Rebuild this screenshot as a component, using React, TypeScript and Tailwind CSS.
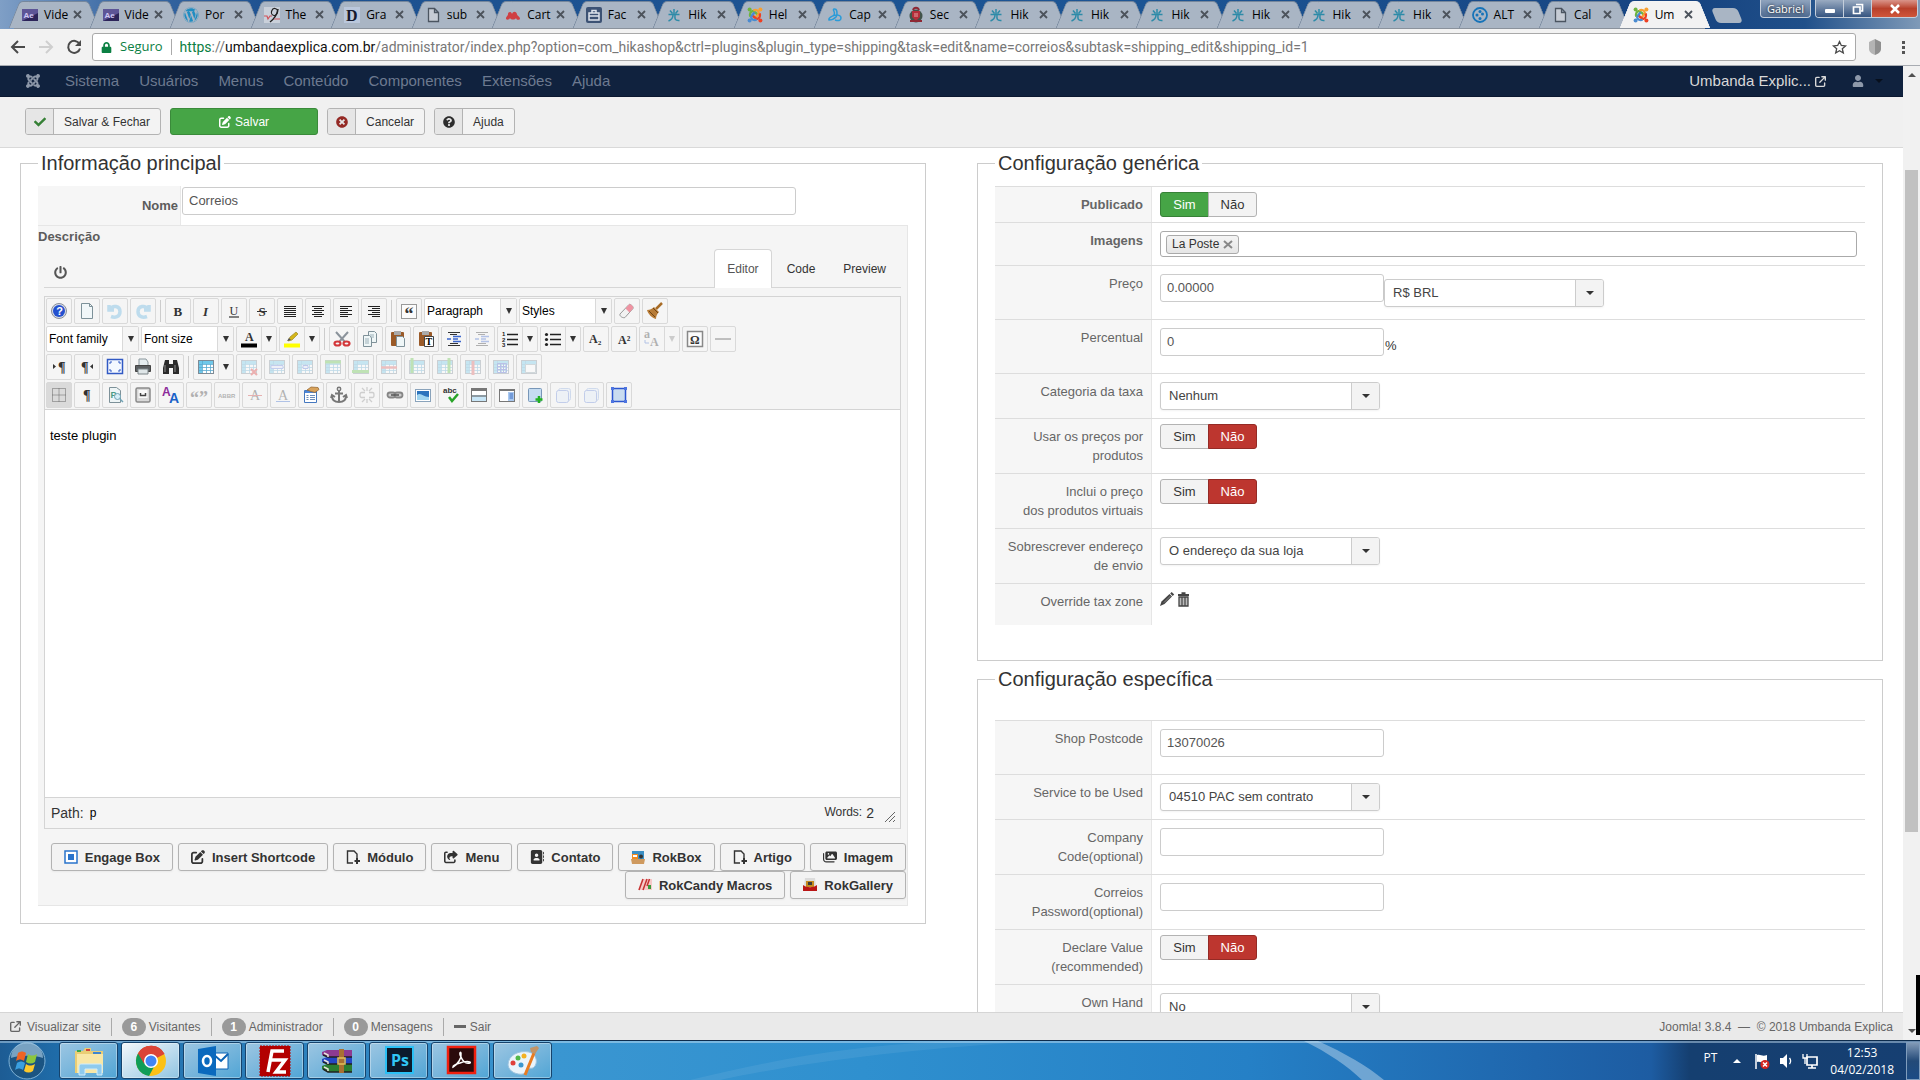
import type { ReactNode } from 'react';
import { clsx } from 'clsx';
import { FaWordpress, FaJoomla, FaPowerOff, FaCheck, FaTimesCircle, FaQuestionCircle, FaUser, FaLock } from 'react-icons/fa';
import { FaPenToSquare, FaArrowUpRightFromSquare, FaShareFromSquare, FaAddressBook, FaImages } from 'react-icons/fa6';

/* ---------- small drawings ---------- */

function Svg({ size = 16, children, className }: { size?: number; children: ReactNode; className?: string }) {
  return (
    <svg viewBox={`0 0 ${size} ${size}`} width={size} height={size} fill="none" className={clsx('shrink-0 overflow-visible', className)} aria-hidden="true">
      {children}
    </svg>
  );
}

function JoomlaColor() {
  const colors = ['#6fb43f', '#f7a032', '#ee4023', '#4a8bd0'];
  return (
    <Svg>
      {colors.map((c, i) => (
        <g key={c} transform={`rotate(${i * 90} 8 8)`} stroke={c} fill={c}>
          <circle cx="2.6" cy="2.6" r="2" stroke="none" />
          <path d="M3.3 9.6C2.4 7 3.4 4.6 5.6 4.2 7 4 8 5 10.6 7.6" fill="none" strokeWidth="2.3" />
        </g>
      ))}
    </Svg>
  );
}

function HikaIcon() {
  return (
    <Svg>
      <path d="M8 2v6M2.500 7.500h11M4 3.500l2.500 3M12 3.500l-2.500 3M7 8c0 3-2 5-4.500 6M9 8c-.5 4 0 6 4.500 5.500" stroke="#2d8ba8" strokeWidth="1.500" />
    </Svg>
  );
}

function FileIcon() {
  return (
    <Svg>
      <path d="M3.500 1.500h6l4 4v9h-10zM9.500 1.500v4h4" stroke="#4b5561" strokeWidth="1.300" fill="#c6ccd5" />
    </Svg>
  );
}

const favicons: Record<string, ReactNode> = {
  ae: (
    <Svg>
      <rect y="2" width="16" height="12" fill="#2c2459" />
      <path d="M0 2h16v4L0 14z" fill="#5d5596" />
      <text x="1.500" y="11" fontSize="8" fontWeight="bold" fill="#cfc8f2" fontFamily="Liberation Sans">Ae</text>
    </Svg>
  ),
  wp: <FaWordpress className="size-4 shrink-0 rounded-full text-[#1f8dc2]" />,
  nine: (
    <Svg>
      <rect width="16" height="16" fill="#c9d0da" />
      <path d="M0 9h3l1 3 2-3h2" stroke="#d0525a" strokeWidth="1.200" />
      <ellipse cx="10.500" cy="5" rx="3" ry="3.500" stroke="#222" strokeWidth="1.200" transform="rotate(20 10.500 5)" />
      <path d="M14 2c-1 6-4 10-8 13" stroke="#222" strokeWidth="1.500" />
      <path d="M10 12h6" stroke="#d0525a" />
    </Svg>
  ),
  d: (
    <Svg>
      <rect width="16" height="16" fill="#bac7dc" />
      <text x="2" y="13.500" fontSize="16" fontWeight="bold" fill="#15192e" fontFamily="Liberation Serif">D</text>
    </Svg>
  ),
  file: <FileIcon />,
  cart: (
    <Svg>
      <path d="M1 12c0-3 2-3 2-5s3-3 4 0c1-3 4-3 5 0 0 2 3 2 3 5-2 2-4 0-4-1-1 2-5 2-6 0-1 2-3 2-4 1z" fill="#cf3f43" />
    </Svg>
  ),
  face: (
    <Svg>
      <rect width="16" height="16" rx="2" fill="#3c5274" />
      <path d="M3 6h10v7H3zM6 6V3.500h4V6M3 9h10" stroke="#dde3ec" strokeWidth="1.500" />
    </Svg>
  ),
  hika: <HikaIcon />,
  joomla: <JoomlaColor />,
  cap: (
    <Svg>
      <path d="M2 13c-1-3 3-3 5-5 2-3-2-5 0-6 3-1 4 5 2 8-2 2-5 3-7 3zm6 0c3 1 6 1 6-2s-5-4-8-2" stroke="#2a9bd8" strokeWidth="1.500" />
    </Svg>
  ),
  sec: (
    <Svg>
      <circle cx="8" cy="9" r="6.500" fill="#41534a" />
      <path d="M4 4h8v6l-4 4-4-4z" fill="#b42c39" />
      <path d="M5 3c1-3 5-3 6 0M2 14h12" stroke="#8d2834" strokeWidth="2" />
      <path d="M6 7h4M6 9h4" stroke="#e5a0a0" />
    </Svg>
  ),
  alt: (
    <Svg>
      <circle cx="8" cy="8" r="7" stroke="#1673b8" strokeWidth="1.800" />
      <g fill="#1673b8">
        <circle cx="8" cy="4.500" r="1.500" />
        <circle cx="5" cy="8" r="1.500" />
        <circle cx="10.500" cy="7" r="1.500" />
        <circle cx="8" cy="11.500" r="1.500" />
      </g>
    </Svg>
  ),
};

const serif = 'Liberation Serif';
const sans = 'Liberation Sans';

function Glyph({ x, y, size, children, ...rest }: any) {
  return (
    <text x={x} y={y} fontSize={size} fontFamily={serif} fontWeight="bold" fill="#333" {...rest}>
      {children}
    </text>
  );
}

function TableBase() {
  return (
    <>
      <rect x="2.500" y="3.500" width="15" height="13" fill="#fff" stroke="#7d8b96" />
      <path d="M3 4h14v3H3zM3 7h3v9H3z" fill="#6fc8ea" />
      <path d="M6.500 4v12M10.500 7v9M14.500 7v9M3 7.500h14M3 10.500h14M3 13.500h14" stroke="#5aa9cf" strokeWidth=".8" />
    </>
  );
}

const lines = (a: number[][]) => <path d={a.map(([x, y, w]) => `M${x} ${y}.5h${w}`).join('')} stroke="#222" strokeWidth="1.200" />;

const tools: Record<string, ReactNode> = {
  help: (
    <>
      <circle cx="10" cy="10" r="7.500" fill="#d7dce6" stroke="#8a8f9c" />
      <circle cx="10" cy="10" r="6" fill="#2350cf" />
      <text x="7.300" y="14" fontSize="11" fontWeight="bold" fill="#fff" fontFamily={sans}>?</text>
    </>
  ),
  newdoc: <path d="M4.500 2.500h8l3 3v12h-11zM12.500 2.500v3h3" fill="#f1f7f9" stroke="#7d9199" />,
  undo: <path d="M4 4v5h5M4.500 8.500C8 3.500 15 5 15 10.500S10 17 6 15.500" stroke="#5aaee0" strokeWidth="3.500" />,
  redo: <path d="M16 4v5h-5M15.500 8.500C12 3.500 5 5 5 10.500S10 17 14 15.500" stroke="#5aaee0" strokeWidth="3.500" />,
  bold: <Glyph x="5.500" y="14.500" size="13">B</Glyph>,
  italic: <Glyph x="7" y="14.500" size="13" fontStyle="italic">I</Glyph>,
  underline: (
    <>
      <Glyph x="5.500" y="13.500" size="12" fontWeight="normal">U</Glyph>
      <path d="M5 16h10" stroke="#333" strokeWidth="1.200" />
    </>
  ),
  strike: (
    <>
      <Glyph x="6.500" y="14.500" size="13">S</Glyph>
      <path d="M5 10.500h10" stroke="#333" />
    </>
  ),
  full: lines([[4, 5, 12], [4, 7, 12], [4, 9, 12], [4, 11, 12], [4, 13, 12], [4, 15, 12]]),
  center: lines([[4, 5, 12], [6, 7, 8], [4, 9, 12], [6, 11, 8], [4, 13, 12], [6, 15, 8]]),
  left: lines([[4, 5, 12], [4, 7, 8], [4, 9, 12], [4, 11, 8], [4, 13, 12], [4, 15, 8]]),
  right: lines([[4, 5, 12], [8, 7, 8], [4, 9, 12], [8, 11, 8], [4, 13, 12], [8, 15, 8]]),
  quote: (
    <>
      <rect x="2.500" y="3.500" width="15" height="14" fill="#fbfbfb" stroke="#999" />
      <Glyph x="5.500" y="19" size="18">“</Glyph>
    </>
  ),
  eraser: (
    <>
      <path d="M3 13 12 3.500c1-1 5 2 4 4L8 16.500c-2 1-6-1.500-5-3.500z" fill="#f2f2f2" stroke="#999" />
      <path d="m8.500 7.500 3.500-4c1-1 5 2 4 4l-3.500 4z" fill="#ef93a2" />
    </>
  ),
  broom: (
    <>
      <path d="m17 2-6 6" stroke="#a86c26" strokeWidth="2.500" />
      <path d="M2 9c3 0 5-1 7-3l5 5c-2 2-3 4-3 7-4-1-8-5-9-9z" fill="#b87c37" />
      <path d="m8 7 5 5M4 10l6 6" stroke="#704414" />
    </>
  ),
  forecolor: (
    <>
      <Glyph x="6" y="12" size="12">A</Glyph>
      <path d="M2 14.500h16v4H2z" fill="#000" />
    </>
  ),
  backcolor: (
    <>
      <path d="m6 12 2-4 6-5 2 2-6 6z" fill="#d5b619" stroke="#9a8a2c" strokeWidth=".7" />
      <path d="m5 12 2-3 2 2z" fill="#555" />
      <path d="M2 14.500h16v4H2z" fill="#ff0" />
    </>
  ),
  cut: (
    <>
      <path d="m4 3 9 10M16 3 7 13" stroke="#8b939b" strokeWidth="2" />
      <ellipse cx="5.500" cy="14.500" rx="3" ry="2" stroke="#d3383b" strokeWidth="2.200" />
      <ellipse cx="14.500" cy="14.500" rx="3" ry="2" stroke="#d3383b" strokeWidth="2.200" />
    </>
  ),
  copy: (
    <>
      <path d="M8.500 2.500h6l2 2v9h-8z" fill="#eff6f7" stroke="#7f9199" />
      <path d="M3.500 6.500h6l2 2v9h-8z" fill="#eff6f7" stroke="#7f9199" />
      <path d="M5 10h4M5 12h4M5 14h4M10 6h4M10 8h4" stroke="#9cb0b8" />
    </>
  ),
  paste: (
    <>
      <rect x="3" y="3" width="13" height="14" rx="1" fill="#9a5a28" />
      <path d="M6 2h7v4H6z" fill="#aaa" />
      <path d="M8.500 7.500h6l2 2v8h-8z" fill="#eff6f7" stroke="#7f9199" />
    </>
  ),
  pastetext: (
    <>
      <rect x="3" y="3" width="13" height="14" rx="1" fill="#9a5a28" />
      <path d="M6 2h7v4H6z" fill="#aaa" />
      <path d="M8.500 7.500h9v10h-9z" fill="#fff" stroke="#444" />
      <Glyph x="9.500" y="16" size="10" fill="#000">T</Glyph>
    </>
  ),
  indent: (
    <>
      <path d="M4 3.500h12M4 16.500h12M6 5.500h7M6 14.500h8" stroke="#333" />
      <path d="M3 10h4M9 7.500h8M9 12.500h8M9 10h5" stroke="#3b66cc" strokeWidth="1.700" />
    </>
  ),
  ol: (
    <>
      <path d="M7 5.500h11M7 10.500h11M7 15.500h11" stroke="#222" strokeWidth="1.300" />
      <text x="2" y="7" fontSize="6" fontWeight="bold" fill="#222" fontFamily={sans}>1</text>
      <text x="2" y="12.500" fontSize="6" fontWeight="bold" fill="#222" fontFamily={sans}>2</text>
      <text x="2" y="18" fontSize="6" fontWeight="bold" fill="#222" fontFamily={sans}>3</text>
    </>
  ),
  ul: (
    <>
      <path d="M7 5.500h11M7 10.500h11M7 15.500h11" stroke="#222" strokeWidth="1.300" />
      <g fill="#222">
        <circle cx="3.500" cy="5.500" r="1.600" />
        <circle cx="3.500" cy="10.500" r="1.600" />
        <circle cx="3.500" cy="15.500" r="1.600" />
      </g>
    </>
  ),
  sub: <Glyph x="3" y="14" size="12">A₂</Glyph>,
  sup: <Glyph x="4" y="15" size="12">A²</Glyph>,
  aa: (
    <>
      <Glyph x="2" y="9" size="12">a</Glyph>
      <Glyph x="8" y="17" size="12">A</Glyph>
      <path d="M3 11v3h4" stroke="#3b66cc" />
    </>
  ),
  omega: (
    <>
      <rect x="2.500" y="2.500" width="15" height="15" fill="#fbfbfb" stroke="#888" strokeWidth="1.500" />
      <Glyph x="5" y="14.500" size="12">Ω</Glyph>
    </>
  ),
  hr: <path d="M2 10h16" stroke="#888" />,
  ltr: (
    <>
      <path d="m4 7 3 2.500-3 2.500z" fill="#333" />
      <Glyph x="9" y="14.500" size="14">¶</Glyph>
    </>
  ),
  rtl: (
    <>
      <Glyph x="4" y="14.500" size="14">¶</Glyph>
      <path d="m16 7-3 2.500 3 2.500z" fill="#333" />
    </>
  ),
  screen: (
    <>
      <rect x="2.500" y="2.500" width="15" height="14" fill="#f4f8ff" stroke="#3159c4" strokeWidth="1.500" />
      <path d="M5 7V5h2M13 5h2v2M15 12v2h-2M7 14H5v-2" stroke="#3159c4" />
    </>
  ),
  print: (
    <>
      <path d="M6 2h7l2 3v4H6z" fill="#e5edf0" stroke="#8b979c" />
      <path d="M2.500 8.500h15v6h-15z" fill="#5a5e61" stroke="#444" />
      <path d="M5 12h10v5H5z" fill="#dfe6e8" stroke="#7b8488" />
    </>
  ),
  search: (
    <>
      <path d="M4 3h4v4h4V3h4l2 8v6h-6v-6H8v6H2v-6z" fill="#2c2c2c" />
      <path d="M4 8v7M14 8v7" stroke="#8c8c8c" />
    </>
  ),
  table: <TableBase />,
  tdel: (
    <>
      <TableBase />
      <path d="m12 12 6 6m0-6-6 6" stroke="#d33" strokeWidth="2" />
    </>
  ),
  trow: (
    <>
      <TableBase />
      <path d="M4 8.500h12v3H4z" fill="#dfe6fb" stroke="#6484e0" />
    </>
  ),
  tcell: (
    <>
      <TableBase />
      <path d="M8 8.500h5v3H8z" fill="#dfe6fb" stroke="#5877d8" />
    </>
  ),
  trowb: (
    <>
      <TableBase />
      <path d="M2 5h16" stroke="#5cc140" strokeWidth="3" />
    </>
  ),
  trowa: (
    <>
      <TableBase />
      <path d="M1 14.500h17" stroke="#5cc140" strokeWidth="3" />
    </>
  ),
  trowd: (
    <>
      <TableBase />
      <path d="M2 10.500h16" stroke="#dd5c5c" strokeWidth="2.500" />
    </>
  ),
  tcolb: (
    <>
      <TableBase />
      <path d="M5 1v15" stroke="#5cc140" strokeWidth="3" />
    </>
  ),
  tcola: (
    <>
      <TableBase />
      <path d="M14 1v15" stroke="#5cc140" strokeWidth="3" />
    </>
  ),
  tcold: (
    <>
      <TableBase />
      <path d="M10 4v14" stroke="#dd5c5c" strokeWidth="3" />
    </>
  ),
  tsplit: (
    <>
      <TableBase />
      <path d="M6.500 6.500h9v9h-9zM9.500 6v9M12.500 6v9M6 9.500h9M6 12.500h9" stroke="#4c63cf" />
    </>
  ),
  tmerge: (
    <>
      <TableBase />
      <path d="M6.500 7.500h10v8h-10z" fill="#fff" stroke="#8fa3ad" />
    </>
  ),
  grid: <path d="M3.500 3.500h13v13h-13zM10 3.500v13M3.500 10h13" stroke="#666" strokeDasharray="1 1" />,
  para: <Glyph x="6" y="14.500" size="14">¶</Glyph>,
  preview: (
    <>
      <path d="M4.500 2.500h7l4 3v12h-11z" fill="#eef5f6" stroke="#7d9199" />
      <text x="5.500" y="13" fontSize="9" fontWeight="bold" fill="#4a9a86" fontFamily={sans}>P</text>
      <circle cx="12.500" cy="11.500" r="3" fill="#d5eff7" stroke="#6fa3b5" />
      <path d="m15 14 3 3" stroke="#6fa3b5" strokeWidth="1.500" />
    </>
  ),
  nbsp: (
    <>
      <rect x="3" y="3" width="14" height="14" rx="1.500" fill="#d8d8d8" stroke="#8a8a8a" strokeWidth="1.500" />
      <path d="M5.500 5h9v8h-9z" fill="#fafafa" />
      <path d="M7.500 8v2.500h5V8" stroke="#444" strokeWidth="1.500" />
    </>
  ),
  styles: (
    <>
      <text x="1" y="11" fontSize="12" fontWeight="bold" fill="#8c2b9b" fontFamily={sans}>A</text>
      <text x="8" y="17.500" fontSize="14" fontWeight="bold" fill="#1b62c8" fontFamily={sans}>A</text>
    </>
  ),
  cite: <Glyph x="1" y="19" size="18">“”</Glyph>,
  abbr: <text x="1" y="13" fontSize="6" fontWeight="bold" fill="#333" fontFamily={sans}>ABBR</text>,
  del: (
    <>
      <Glyph x="5" y="15" size="14" fontWeight="normal">A</Glyph>
      <path d="M3 10.500h14" stroke="#c33" />
    </>
  ),
  ins: (
    <>
      <Glyph x="5" y="14.500" size="14" fontWeight="normal">A</Glyph>
      <path d="M3 16.500h14" stroke="#36c" />
    </>
  ),
  attribs: (
    <>
      <path d="M3.500 5.500h12v12h-12z" fill="#fff" stroke="#4477bf" />
      <path d="M4 6h11v2H4z" fill="#4c86d8" />
      <path d="M5.500 10.500h2M5.500 12.500h2M5.500 14.500h2M9 10.500h5M9 12.500h5M9 14.500h5" stroke="#6b8bb8" />
      <path d="m6 5 4-3 7 .5 1 2-4 3-4-1z" fill="#d8a25b" stroke="#91622a" strokeWidth=".7" />
    </>
  ),
  anchor: (
    <>
      <circle cx="10" cy="4" r="1.700" stroke="#777" strokeWidth="1.500" />
      <path d="M10 6v11M6 8.500h8M3 11c0 4 3 6 7 6s7-2 7-6M2 13l1-3 3 2M18 13l-1-3-3 2" stroke="#777" strokeWidth="2" />
    </>
  ),
  unlink: <path d="M8 7.500H4.500c-2 0-2 5 0 5H8M12 7.500h3.500c2 0 2 5 0 5H12M10 2v4M10 14v4M5 3l3 3M15 3l-3 3M5 17l3-3M15 17l-3-3" stroke="#888" strokeWidth="1.300" />,
  link: (
    <>
      <rect x="2.500" y="7.500" width="8" height="5" rx="2.500" fill="#ccc" stroke="#858585" strokeWidth="1.800" />
      <rect x="9.500" y="7.500" width="8" height="5" rx="2.500" fill="#ccc" stroke="#858585" strokeWidth="1.800" />
      <path d="M6 10h8" stroke="#555" strokeWidth="1.500" />
    </>
  ),
  image: (
    <>
      <rect x="2.500" y="4.500" width="15" height="12" fill="#fff" stroke="#8aa3bb" />
      <path d="M4 6h12v9H4z" fill="#2c73bd" />
      <path d="M4 10c4-3 6 2 12 2v3H4z" fill="#9fd4f0" />
    </>
  ),
  spell: (
    <>
      <text x="2" y="8" fontSize="8" fontWeight="bold" fill="#333" fontFamily={sans}>abc</text>
      <path d="m8 12 3 4 6-7" stroke="#28a428" strokeWidth="2.500" />
    </>
  ),
  hbreak: (
    <>
      <rect x="2.500" y="3.500" width="15" height="13" fill="#fff" stroke="#777" />
      <path d="M3 4h14v2H3z" fill="#777" />
      <path d="M3 12h14v4H3z" fill="#c8e6f7" />
      <path d="M3 11h14" stroke="#4f6470" strokeWidth="1.300" />
    </>
  ),
  readmore: (
    <>
      <rect x="2.500" y="4.500" width="15" height="12" fill="#fff" stroke="#777" />
      <path d="M3 4h14v2H3z" fill="#777" />
      <path d="M11 7h6v9h-6z" fill="#a9c8ef" />
      <path d="M12.500 9h3.500M12.500 11h3.500M12.500 13h3.500" stroke="#3d6cc1" />
    </>
  ),
  layeradd: (
    <>
      <rect x="3.500" y="3.500" width="13" height="13" rx="1" fill="#c5dcf1" stroke="#7796b8" />
      <path d="M14 11v7M10.500 14.500h7" stroke="#22b022" strokeWidth="2.500" />
    </>
  ),
  layer: (
    <>
      <rect x="5.500" y="3.500" width="12" height="12" rx="2" fill="#e1ecf8" stroke="#8aa9dd" />
      <rect x="3.500" y="5.500" width="12" height="12" rx="2" fill="#e1ecf8" stroke="#6484d8" />
    </>
  ),
  abs: (
    <>
      <rect x="3.500" y="3.500" width="13" height="13" fill="#c9dcf0" stroke="#2b55cf" strokeWidth="1.500" />
      <path d="M2 2h3v3H2zM15 2h3v3h-3zM2 15h3v3H2zM15 15h3v3h-3z" fill="#4d74e0" />
    </>
  ),
};

/* ---------- browser ---------- */

const tabs: [string, string][] = [
  ['ae', 'Vide'], ['ae', 'Vide'], ['wp', 'Por'], ['nine', 'The'], ['d', 'Gra'], ['file', 'sub'], ['cart', 'Cart'],
  ['face', 'Fac'], ['hika', 'Hik'], ['joomla', 'Hel'], ['cap', 'Cap'], ['sec', 'Sec'], ['hika', 'Hik'], ['hika', 'Hik'],
  ['hika', 'Hik'], ['hika', 'Hik'], ['hika', 'Hik'], ['hika', 'Hik'], ['alt', 'ALT'], ['file', 'Cal'], ['joomla', 'Um'],
];

function BrowserTab({ icon, title, active }: { icon: string; title: string; active: boolean }) {
  return (
    <li
      className={clsx(
        'relative isolate flex h-full min-w-0 flex-1 items-center pl-2 text-[12px]',
        'before:absolute before:inset-y-0 before:left-0 before:-z-10 before:w-3/4 before:-skew-x-[22deg] before:rounded-tl before:border-l before:border-t',
        'after:absolute after:inset-y-0 after:right-0 after:-z-10 after:w-3/4 after:skew-x-[22deg] after:rounded-tr after:border-r after:border-t',
        active
          ? 'z-10 before:border-[#f4f4f4] before:bg-[#f2f2f2] after:border-[#f4f4f4] after:bg-[#f2f2f2]'
          : 'before:border-[#76879c] before:bg-[#a9b5c4] after:border-[#76879c] after:bg-[#a9b5c4]'
      )}
    >
      {favicons[icon]}
      <span className="ml-1.5 w-[29px] whitespace-nowrap">{title}</span>
      <button aria-label="Fechar guia">
        <Svg size={9}>
          <path d="m1 1 7 7m0-7L1 8" stroke="#4c535c" strokeWidth="1.800" />
        </Svg>
      </button>
    </li>
  );
}

function TitleBar() {
  return (
    <div className="flex h-[29px] shrink-0 items-start bg-[linear-gradient(90deg,#7f9fc6,#3d6ba5_6%,#1d5190_14%,#1c5594_60%,#164380_88%,#20508a_94%,#7f9ab8)] font-['Open_Sans',sans-serif]">
      <ul className="ml-3.5 mt-px flex h-7 min-w-0 flex-1 border-b border-[#8a929c]">
        {tabs.map(([icon, title], i) => (
          <BrowserTab key={i} icon={icon} title={title} active={i === tabs.length - 1} />
        ))}
      </ul>
      <button aria-label="Nova guia" className="ml-[9px] mt-2 h-[15px] w-[26px] skew-x-[22deg] rounded-sm bg-[#a9b5c4]" />
      <button className="ml-[20px] h-[18px] w-[51px] rounded-b border border-t-0 border-[#c4cedb] bg-linear-to-b from-[#8fa3bd] to-[#4e6a90] text-[11px] leading-4 text-white [text-shadow:0_0_3px_#000]">
        Gabriel
      </button>
      <div className="ml-1 mr-0.5 flex h-[18px] w-[103px] overflow-hidden rounded-b border border-t-0 border-[#c4cedb]">
        <button aria-label="Minimizar" className="flex w-7 items-center justify-center border-r border-[#c4cedb] bg-linear-to-b from-[#9aabc1] to-[#365580]">
          <span className="mt-1 h-1 w-2.5 rounded-[1px] bg-white" />
        </button>
        <button aria-label="Restaurar" className="flex w-7 items-center justify-center border-r border-[#c4cedb] bg-linear-to-b from-[#9aabc1] to-[#365580]">
          <Svg size={12}>
            <path d="M4 1.500h6.500V8H9M1.500 4H8v6.500H1.500z" stroke="#fff" strokeWidth="1.700" />
          </Svg>
        </button>
        <button aria-label="Fechar" className="flex flex-1 items-center justify-center bg-linear-to-b from-[#d9948a] via-[#b8402b] to-[#d0563a]">
          <Svg size={12}>
            <path d="m2 2 8 8m0-8-8 8" stroke="#fff" strokeWidth="2.500" />
          </Svg>
        </button>
      </div>
    </div>
  );
}

function AddressBar() {
  return (
    <div className="flex h-[37px] shrink-0 items-center border-b border-[#a8acb2] bg-[#f2f2f2] font-['Open_Sans',sans-serif] text-[13px]">
      <button aria-label="Voltar" className="ml-2.5">
        <Svg size={16}>
          <path d="M15 8H2m6-6L2 8l6 6" stroke="#4a4a4a" strokeWidth="2" />
        </Svg>
      </button>
      <button aria-label="Avançar" className="ml-3">
        <Svg size={16}>
          <path d="M1 8h13M8 2l6 6-6 6" stroke="#cfcfcf" strokeWidth="2" />
        </Svg>
      </button>
      <button aria-label="Recarregar" className="ml-3">
        <Svg size={16}>
          <path d="M13.500 5A6 6 0 1 0 14 9.500" stroke="#4a4a4a" strokeWidth="2" />
          <path d="M15 1v6H9z" fill="#4a4a4a" />
        </Svg>
      </button>
      <div className="ml-2.5 flex h-7 min-w-0 flex-1 items-center rounded-[3px] border border-[#a9a9a9] bg-white">
        <FaLock className="ml-2 size-[11px] text-[#0b8043]" />
        <span className="ml-2 text-[#0b8043]">Seguro</span>
        <span className="mx-2 h-4 w-px bg-[#aaa]" />
        <span className="flex-1 truncate font-['Roboto',sans-serif] text-[14px] text-[#777]">
          <span className="text-[#0b8043]">https</span>://<span className="text-[#111]">umbandaexplica.com.br</span>
          /administrator/index.php?option=com_hikashop&amp;ctrl=plugins&amp;plugin_type=shipping&amp;task=edit&amp;name=correios&amp;subtask=shipping_edit&amp;shipping_id=1
        </span>
        <button aria-label="Favoritar" className="mr-2">
          <Svg size={15}>
            <path d="m7.500 1.500 1.800 4 4.200.4-3.200 2.800 1 4.300-3.800-2.300L3.700 13l1-4.300L1.500 5.900l4.200-.4z" stroke="#4a4a4a" strokeWidth="1.300" />
          </Svg>
        </button>
      </div>
      <button aria-label="Extensão" className="ml-[11px]">
        <Svg size={16}>
          <path d="M8 0 14 3v7c0 3-3 5-6 6z" fill="#8f8f8f" />
          <path d="M8 0 2 3v7c0 3 3 5 6 6z" fill="#b4b4b4" />
        </Svg>
      </button>
      <button aria-label="Menu" className="ml-3 mr-[9px]">
        <Svg size={16}>
          <path d="M7 2h3v3H7zM7 7h3v3H7zM7 12h3v3H7z" fill="#555" />
        </Svg>
      </button>
    </div>
  );
}

/* ---------- Joomla top ---------- */

function NavBar() {
  const items = ['Sistema', 'Usuários', 'Menus', 'Conteúdo', 'Componentes', 'Extensões', 'Ajuda'];
  return (
    <nav className="flex h-[31px] shrink-0 items-center border-b border-[#0b1830] bg-[#10223e] text-[15px] text-[#6d7a90]">
      <FaJoomla className="ml-[25px] mr-3.5 size-4 text-[#8e99aa]" />
      {items.map((item) => (
        <a key={item} href="#" className="px-2.5">{item}</a>
      ))}
      <a href="#" className="ml-auto flex items-center text-[#d9d9d9]">
        Umbanda Explic... <FaArrowUpRightFromSquare className="ml-1 size-[11px]" />
      </a>
      <button aria-label="Conta" className="ml-[26px] mr-5 flex items-center">
        <FaUser className="size-3 text-[#8e99aa]" />
        <span className="ml-[11px] border-x-4 border-t-4 border-x-transparent border-t-[#070f1c]" />
      </button>
    </nav>
  );
}

function ActionButton({ icon, children }: { icon: ReactNode; children: ReactNode }) {
  return (
    <button className="flex h-[27px] items-stretch overflow-hidden rounded-[3px] border border-[#b3b3b3] bg-[#f3f3f3] text-[#333]">
      <span className="flex w-7 items-center justify-center border-r border-[#b3b3b3] bg-[#e6e6e6]">{icon}</span>
      <span className="self-center px-2.5">{children}</span>
    </button>
  );
}

function ActionBar() {
  return (
    <div className="flex h-[51px] shrink-0 items-center gap-[9px] border-b border-[#d9d9d9] bg-[#f0f0f0] pb-px pl-[25px] text-[12px]">
      <ActionButton icon={<FaCheck className="size-3 text-[#378137]" />}>Salvar &amp; Fechar</ActionButton>
      <button className="flex h-[27px] w-[148px] items-center justify-center gap-1 rounded-[3px] border border-[#3a8a3a] bg-[#46a546] text-white">
        <FaPenToSquare className="size-3" />
        <span>Salvar</span>
      </button>
      <ActionButton icon={<FaTimesCircle className="size-3 text-[#942a25]" />}>Cancelar</ActionButton>
      <ActionButton icon={<FaQuestionCircle className="size-3 text-[#2d2d2d]" />}>Ajuda</ActionButton>
    </div>
  );
}

/* ---------- editor ---------- */

function Tool({ name, off, active }: { name: string; off?: boolean; active?: boolean }) {
  return (
    <button
      aria-label={name}
      disabled={off}
      className={clsx('flex size-[26px] items-center justify-center rounded-[2px] border border-[#d9d9d9]', active && 'bg-[#dadada]')}
    >
      <Svg size={20} className={off ? 'opacity-35' : undefined}>{tools[name]}</Svg>
    </button>
  );
}

function Arrow({ off }: { off?: boolean }) {
  return <span className={clsx('border-x-[3px] border-t-[6px] border-x-transparent', off ? 'border-t-[#ccc]' : 'border-t-[#333]')} />;
}

function SplitTool({ name, off }: { name: string; off?: boolean }) {
  return (
    <div className="flex h-[26px] w-[41px] rounded-[2px] border border-[#d9d9d9]">
      <button aria-label={name} disabled={off} className="flex w-[25px] items-center justify-center border-r border-[#d9d9d9]">
        <Svg size={20} className={off ? 'opacity-35' : undefined}>{tools[name]}</Svg>
      </button>
      <button aria-label={`${name} opções`} disabled={off} className="flex flex-1 items-center justify-center">
        <Arrow off={off} />
      </button>
    </div>
  );
}

function ToolSelect({ label }: { label: string }) {
  return (
    <div className="relative h-[26px] w-[93px] rounded-[2px] border border-[#d9d9d9] bg-white">
      <select aria-label={label} className="block h-full w-full appearance-none pl-0.5 text-[12px] text-black">
        <option>{label}</option>
      </select>
      <span className="pointer-events-none absolute inset-y-0 right-0 flex w-4 items-center justify-center border-l border-[#d9d9d9] bg-[#f5f5f5]">
        <Arrow />
      </span>
    </div>
  );
}

const Sep = () => <span className="mx-0.5 h-[22px] w-px self-center bg-[#ccc]" />;

function EditorToolbar() {
  return (
    <div className="flex flex-col gap-0.5 border-b border-[#d4d4d4] p-px">
      <div className="flex gap-0.5">
        <Tool name="help" /><Tool name="newdoc" /><Tool name="undo" off /><Tool name="redo" off />
        <Sep />
        <Tool name="bold" /><Tool name="italic" /><Tool name="underline" /><Tool name="strike" />
        <Tool name="full" /><Tool name="center" /><Tool name="left" /><Tool name="right" />
        <Sep />
        <Tool name="quote" /><ToolSelect label="Paragraph" /><ToolSelect label="Styles" />
        <Tool name="eraser" /><Tool name="broom" />
      </div>
      <div className="flex gap-0.5">
        <ToolSelect label="Font family" /><ToolSelect label="Font size" />
        <SplitTool name="forecolor" /><SplitTool name="backcolor" />
        <Sep />
        <Tool name="cut" /><Tool name="copy" /><Tool name="paste" /><Tool name="pastetext" />
        <Tool name="indent" /><Tool name="indent" off />
        <SplitTool name="ol" /><SplitTool name="ul" />
        <Tool name="sub" /><Tool name="sup" /><SplitTool name="aa" off /><Tool name="omega" /><Tool name="hr" />
      </div>
      <div className="flex gap-0.5">
        <Tool name="ltr" /><Tool name="rtl" /><Tool name="screen" /><Tool name="print" /><Tool name="search" />
        <Sep />
        <SplitTool name="table" />
        {['tdel', 'trow', 'tcell', 'trowb', 'trowa', 'trowd', 'tcolb', 'tcola', 'tcold', 'tsplit', 'tmerge'].map((t) => (
          <Tool key={t} name={t} off />
        ))}
      </div>
      <div className="flex gap-0.5">
        <Tool name="grid" active /><Tool name="para" /><Tool name="preview" /><Tool name="nbsp" /><Tool name="styles" />
        <Tool name="cite" off /><Tool name="abbr" off /><Tool name="del" off /><Tool name="ins" off />
        <Tool name="attribs" /><Tool name="anchor" /><Tool name="unlink" off /><Tool name="link" /><Tool name="image" />
        <Tool name="spell" /><Tool name="hbreak" /><Tool name="readmore" /><Tool name="layeradd" />
        <Tool name="layer" off /><Tool name="layer" off /><Tool name="abs" />
      </div>
    </div>
  );
}

function FileAdd() {
  return (
    <Svg size={14}>
      <path d="M7 13H1.500V1H8l3 3v4" stroke="#333" strokeWidth="1.400" />
      <path d="M11 8v6M8.500 11H14" stroke="#333" strokeWidth="2" />
    </Svg>
  );
}

const insertButtons: { label: string; icon: ReactNode }[] = [
  {
    label: 'Engage Box',
    icon: (
      <Svg size={14}>
        <rect x="1" y="1" width="12" height="12" fill="#fff" stroke="#2a74cc" strokeWidth="1.500" />
        <path d="M4 4h6v6H4z" fill="#2a74cc" />
      </Svg>
    ),
  },
  { label: 'Insert Shortcode', icon: <FaPenToSquare className="size-3.5" /> },
  { label: 'Módulo', icon: <FileAdd /> },
  { label: 'Menu', icon: <FaShareFromSquare className="size-3.5" /> },
  { label: 'Contato', icon: <FaAddressBook className="size-3.5" /> },
  {
    label: 'RokBox',
    icon: (
      <Svg size={14}>
        <path d="M0 9h14l-1 5H1z" fill="#cf9a5f" />
        <path d="M1 1h12v8H1z" fill="#3b8fc4" />
        <path d="M1 4h6v5H1z" fill="#f28a1d" />
        <path d="M2 5h4v2H2z" fill="#fff" />
        <circle cx="10" cy="6.500" r="2" fill="#333" />
      </Svg>
    ),
  },
  { label: 'Artigo', icon: <FileAdd /> },
  { label: 'Imagem', icon: <FaImages className="size-3.5" /> },
  {
    label: 'RokCandy Macros',
    icon: (
      <Svg size={14}>
        <path d="M0 12 4 1h10v11z" fill="#f6c9c9" />
        <path d="m1 12 4-11M5 12l4-11M9 8l2.500-7" stroke="#c43131" strokeWidth="1.500" />
        <path d="M10 7h3v4h-3z" fill="#3c9b3c" />
      </Svg>
    ),
  },
  {
    label: 'RokGallery',
    icon: (
      <Svg size={14}>
        <path d="M2 0h10l1 8H1z" fill="#dcdcdc" />
        <path d="M3 3h8v6H3z" fill="#c58a1f" />
        <path d="M5 4h4v3H5z" fill="#3a3a3a" />
        <path d="M0 7c4 3 10 3 14 0v6H0z" fill="#b91515" />
      </Svg>
    ),
  },
];

function MainInfo() {
  return (
    <FieldBox title="Informação principal" className="pb-[17px]">
      <div className="flex h-[39px] text-[13px]">
        <label htmlFor="name" className="w-[143px] border-r border-[#e8e8e8] bg-[#f6f6f6] pr-0.5 pt-2.5 text-right font-bold text-[#5c5c5c]">Nome</label>
        <input id="name" defaultValue="Correios" className="ml-px mt-px h-7 w-[614px] rounded-[3px] border border-[#ccc] px-1.5 pb-0.5 text-[#555]" />
      </div>
      <div className="border-y border-r border-[#e6e6e6] bg-[#f5f5f5] pb-1.5">
        <div className="pt-px text-[13px] font-bold text-[#5c5c5c]">Descrição</div>
        <div className="mx-1.5 mt-1 flex h-[38px] items-end border-b border-[#d6d6d6] text-[12px] leading-[18px]">
          <button aria-label="Alternar editor" className="mb-2 ml-2.5">
            <FaPowerOff className="size-[13px] text-[#555]" />
          </button>
          <div className="ml-auto mr-0.5 flex h-[38px] gap-0.5" role="tablist">
            <button role="tab" aria-selected="true" className="-mb-px rounded-t border border-b-0 border-[#d6d6d6] bg-white px-3 text-[#555]">Editor</button>
            <button role="tab" className="px-[13px] pt-0.5 text-[#333]">Code</button>
            <button role="tab" className="px-[13px] pt-0.5 text-[#333]">Preview</button>
          </div>
        </div>
        <div className="mx-1.5 mt-2 border border-[#d4d4d4]">
          <EditorToolbar />
          <textarea aria-label="Descrição" defaultValue="teste plugin" className="block h-[387px] w-full resize-none bg-white px-[5px] pt-4 text-[13px] leading-[19px] text-black" />
          <div className="flex h-[31px] items-center border-t border-[#d4d4d4] pl-1.5 pr-1 text-[14px] text-[#333]">
            <span>Path:</span>
            <a href="#" className="ml-1.5 text-[12px] text-black">p</a>
            <span className="ml-auto pb-0.5 text-[12px]">Words:</span>
            <span className="ml-1">2</span>
            <Svg size={12} className="ml-2.5 mt-2">
              <path d="M1 11 11 1M5 11l6-6M9 11l2-2" stroke="#666" />
            </Svg>
          </div>
        </div>
        <div className="mt-3.5 flex flex-wrap justify-end gap-x-[5px] pr-px">
          {insertButtons.map(({ label, icon }) => (
            <button key={label} className="flex h-7 items-center gap-[7px] rounded-[3px] border border-[#b3b3b3] bg-[#f3f3f3] px-3 text-[13px] font-bold text-[#333] shadow-xs">
              {icon}
              {label}
            </button>
          ))}
        </div>
      </div>
    </FieldBox>
  );
}

/* ---------- settings ---------- */

function FieldBox({ title, className, children }: { title: string; className?: string; children: ReactNode }) {
  return (
    <fieldset className={clsx('min-w-0 border border-[#ccc] px-[17px]', className)}>
      <legend className="mb-[13px] px-[3px] text-[20px] leading-5 text-[#333]">{title}</legend>
      {children}
    </fieldset>
  );
}

function Row({ id, label, bold, tight, className, children }: { id: string; label: string; bold?: boolean; tight?: boolean; className: string; children: ReactNode }) {
  return (
    <div className={clsx('flex border-t border-[#ddd]', className)}>
      <div className={clsx('w-[157px] shrink-0 border-r border-[#e6e6e6] bg-[#f6f6f6] pr-2 pt-2 text-right text-[#666]', bold && 'font-bold text-[#5c5c5c]')}>
        <label id={`${id}-label`} htmlFor={id} className="whitespace-pre-line">{label}</label>
      </div>
      <div className={clsx('flex min-w-0 flex-1 items-start px-2', tight ? 'pt-[5px]' : 'pt-2')}>{children}</div>
    </div>
  );
}

function TextBox({ id, value = '' }: { id: string; value?: string }) {
  return <input id={id} defaultValue={value} className="h-7 w-56 rounded-[3px] border border-[#ccc] px-1.5 pb-0.5 text-[#555]" />;
}

function Choice({ id, label, value }: { id: string; label?: string; value: string }) {
  return (
    <div className="relative h-7 w-[220px] rounded-[3px] border border-[#ccc] bg-white shadow-xs">
      <select id={id} aria-label={label} className="block h-full w-full appearance-none pb-0.5 pl-2 text-[#444]">
        <option>{value}</option>
      </select>
      <span className="pointer-events-none absolute inset-y-0 right-0 flex w-7 items-center justify-center rounded-r-[2px] border-l border-[#ccc] bg-[#f3f3f3]">
        <span className="border-x-4 border-t-4 border-x-transparent border-t-[#333]" />
      </span>
    </div>
  );
}

function Toggle({ id, on }: { id: string; on?: boolean }) {
  return (
    <div role="radiogroup" aria-labelledby={`${id}-label`} className="flex h-[25px] text-[#333]">
      <label className="flex w-[49px] items-center justify-center rounded-l-[3px] border border-[#b3b3b3] bg-[#f3f3f3] has-checked:border-[#378137] has-checked:bg-[#46a546] has-checked:text-white">
        <input type="radio" id={id} name={id} defaultChecked={on} className="sr-only" />
        Sim
      </label>
      <label className="-ml-px flex w-[49px] items-center justify-center rounded-r-[3px] border border-[#b3b3b3] bg-[#f3f3f3] has-checked:border-[#942a25] has-checked:bg-[#bd362f] has-checked:text-white">
        <input type="radio" name={id} defaultChecked={!on} className="sr-only" />
        Não
      </label>
    </div>
  );
}

function GenericConfig() {
  return (
    <FieldBox title="Configuração genérica" className="pb-[35px]">
      <Row id="published" label="Publicado" bold tight className="h-9">
        <Toggle id="published" on />
      </Row>
      <Row id="images" label="Imagens" bold className="h-[43px]">
        <div className="flex h-[26px] flex-1 items-center rounded-[3px] border border-[#aaa] bg-white pl-[5px]">
          <span className="flex h-[19px] items-center gap-1 rounded-[3px] border border-[#aaa] bg-linear-to-b from-[#f4f4f4] to-[#e6e6e6] px-[5px] text-[12px] text-[#333]">
            La Poste
            <button aria-label="Remover La Poste">
              <Svg size={10}>
                <path d="m1 2 8 7m0-7L1 9" stroke="#888" strokeWidth="2" />
              </Svg>
            </button>
          </span>
          <input id="images" className="min-w-0 flex-1 outline-none" />
        </div>
      </Row>
      <Row id="price" label="Preço" className="h-[54px]">
        <TextBox id="price" value="0.00000" />
        <div className="mt-[5px]">
          <Choice id="currency" label="Moeda" value="R$ BRL" />
        </div>
      </Row>
      <Row id="percent" label="Percentual" className="h-[54px]">
        <TextBox id="percent" value="0" />
        <span className="ml-px mt-2 text-[#333]">%</span>
      </Row>
      <Row id="tax" label="Categoria da taxa" className="h-[45px]">
        <Choice id="tax" value="Nenhum" />
      </Row>
      <Row id="per_product" label="Usar os preços por produtos" tight className="h-[55px]">
        <Toggle id="per_product" />
      </Row>
      <Row id="virtual" label={'Inclui o preço\ndos produtos virtuais'} tight className="h-[55px]">
        <Toggle id="virtual" />
      </Row>
      <Row id="address" label="Sobrescrever endereço de envio" className="h-[55px]">
        <Choice id="address" value="O endereço da sua loja" />
      </Row>
      <Row id="zone" label="Override tax zone" className="h-[42px]">
        <button id="zone" aria-label="Editar zona">
          <Svg size={14}>
            <path d="M0 14 1.500 9.500 9.500 2l2.500 2.500L4.500 12z" fill="#444" />
            <path d="m10.200 1.500 1.500-1.500 2.500 2.500-1.500 1.500z" fill="#444" />
            <path d="M4 10.500 10.500 4" stroke="#999" strokeWidth=".8" />
          </Svg>
        </button>
        <button aria-label="Excluir zona" className="ml-1">
          <Svg size={15}>
            <path d="M0 3h11M3.500 1.200h4" stroke="#444" strokeWidth="2" />
            <path d="M1 5h9v9H1z" fill="#bbb" stroke="#444" strokeWidth="1.300" />
            <path d="M4 5v9M7 5v9" stroke="#444" strokeWidth="1.200" />
          </Svg>
        </button>
      </Row>
    </FieldBox>
  );
}

function SpecificConfig() {
  return (
    <FieldBox title="Configuração específica" className="mt-2 pb-9">
      <div className="mt-[18px]">
        <Row id="postcode" label="Shop Postcode" className="h-[54px]">
          <TextBox id="postcode" value="13070026" />
        </Row>
        <Row id="service" label="Service to be Used" className="h-[45px]">
          <Choice id="service" value="04510 PAC sem contrato" />
        </Row>
        <Row id="company" label={'Company\nCode(optional)'} className="h-[55px]">
          <TextBox id="company" />
        </Row>
        <Row id="password" label={'Correios\nPassword(optional)'} className="h-[55px]">
          <TextBox id="password" />
        </Row>
        <Row id="declare" label={'Declare Value\n(recommended)'} tight className="h-[55px]">
          <Toggle id="declare" />
        </Row>
        <Row id="ownhand" label="Own Hand" className="h-[45px]">
          <Choice id="ownhand" value="No" />
        </Row>
      </div>
    </FieldBox>
  );
}

/* ---------- bottom ---------- */

function Counter({ n, label }: { n: number; label: string }) {
  return (
    <span className="flex items-center border-l border-[#aaa] pl-2.5">
      <span className="mr-[3px] flex h-[18px] w-6 items-center justify-center rounded-full bg-[#999] font-bold text-white">{n}</span>
      {label}
    </span>
  );
}

function StatusBar() {
  return (
    <footer className="flex h-7 shrink-0 items-center border-t border-[#d5d5d5] bg-[#eaeaea] px-2.5 text-[12px] text-[#666]">
      <div className="flex h-[14px] items-center gap-2.5">
        <a href="#" className="flex items-center gap-1.5">
          <FaArrowUpRightFromSquare className="size-[11px]" />
          Visualizar site
        </a>
        <Counter n={6} label="Visitantes" />
        <Counter n={1} label="Administrador" />
        <Counter n={0} label="Mensagens" />
        <a href="#" className="flex items-center gap-1 border-l border-[#aaa] pl-2.5">
          <span className="h-[3px] w-3 bg-[#666]" />
          Sair
        </a>
      </div>
      <div className="ml-auto whitespace-pre">{'Joomla! 3.8.4  —  © 2018 Umbanda Explica'}</div>
    </footer>
  );
}

const apps: { name: string; icon: ReactNode }[] = [
  {
    name: 'Explorer',
    icon: (
      <>
        <path d="M2 6h8l2-3h6v3h12v22H2z" fill="#e9cd75" />
        <path d="M4 9h26v19H4z" fill="#f8e7a7" />
        <path d="M4 5h4v2H4z" fill="#3aa84a" />
        <path d="M13 4h4v2h-4z" fill="#d3453a" />
        <path d="M20 7h8v2h-8z" fill="#3e86d0" />
        <path d="M6 30v-9c0-2 2-2 3-2h18c1 0 2 0 2 2v9h-5v-6H12v6z" fill="#8fcbee" stroke="#d2edfb" />
      </>
    ),
  },
  {
    name: 'Chrome',
    icon: (
      <>
        <circle cx="16" cy="16" r="15" fill="#fbc116" />
        <path d="M16 16 3 8.500A15 15 0 0 1 29.500 9z" fill="#db4437" />
        <path d="M3 8.500A15 15 0 0 0 14 31l6-11-4-4z" fill="#0f9d58" />
        <path d="M16 9h13.500A15 15 0 0 0 3 8.500l6 10z" fill="#db4437" />
        <circle cx="16" cy="16" r="7" fill="#fff" />
        <circle cx="16" cy="16" r="5.500" fill="#4285f4" />
      </>
    ),
  },
  {
    name: 'Outlook',
    icon: (
      <>
        <path d="M15 8h16v16H15z" fill="#fff" stroke="#0a63b5" />
        <path d="m16 9 8 7 7-7" stroke="#0a63b5" strokeWidth="2" />
        <path d="m1 4 18-3v30L1 28z" fill="#0a69bd" />
        <ellipse cx="10" cy="16" rx="4" ry="5" stroke="#fff" strokeWidth="2.600" />
      </>
    ),
  },
  {
    name: 'FileZilla',
    icon: (
      <>
        <rect x="1" y="1" width="30" height="30" fill="#b30000" stroke="#b30000" strokeDasharray="2 1" />
        <path d="M9 27 13 6h12M11 15h10M17 15h9l-9 12h10" stroke="#fff" strokeWidth="3.500" />
      </>
    ),
  },
  {
    name: 'WinRAR',
    icon: (
      <>
        <path d="m1 7 5-2h25v7H6l-5-2z" fill="#8d3a91" />
        <path d="m1 14 5-2h25v7H6l-5-2z" fill="#2446c4" />
        <path d="m1 21 5-2h25v8H6l-5-3z" fill="#2b7d31" />
        <path d="M2 10l5 2h24M2 17l5 2h24M2 24l5 3h24" stroke="#222" strokeWidth="1.500" />
        <path d="M3 8l4 2v2M3 15l4 2v2M3 22l4 2v2" stroke="#e8e4da" strokeWidth="1.500" />
        <path d="M18 4h5v24h-5z" fill="#a97031" />
        <rect x="17" y="13" width="7" height="6" stroke="#e2c15a" strokeWidth="1.500" />
      </>
    ),
  },
  {
    name: 'Photoshop',
    icon: (
      <>
        <rect x="3" y="2" width="27" height="26" fill="#0c1a2c" stroke="#2bc0f5" strokeWidth="2" />
        <text x="8" y="21" fontSize="16" fontWeight="bold" fill="#31c5f4" fontFamily="Open Sans">Ps</text>
      </>
    ),
  },
  {
    name: 'Acrobat',
    icon: (
      <>
        <rect x="3" y="2" width="27" height="26" fill="#2b0b0c" stroke="#f0200f" strokeWidth="2.500" />
        <path d="M8 22c5-3 9-9 8-14-1-2-2 1 0 4 2 5 5 7 9 6 2-2-6-2-10 0-4 1-7 3-7 4z" stroke="#fff" strokeWidth="1.500" />
      </>
    ),
  },
  {
    name: 'Paint',
    icon: (
      <>
        <path d="M1 20C1 10 12 5 22 7c7 2 9 9 6 14-3 4-5 1-8 3-2 2 0 4-4 5-6 1-14-2-15-9z" fill="#eaf4fb" stroke="#9cc3df" />
        <circle cx="6" cy="18" r="2.500" fill="#e0403a" />
        <circle cx="11" cy="13" r="2.500" fill="#52b848" />
        <circle cx="17" cy="11" r="2.500" fill="#f4b224" />
        <circle cx="14" cy="20" r="2.500" fill="#3a97cf" />
        <path d="m27 8-9 22" stroke="#e87c22" strokeWidth="3" />
        <path d="m23 3 7-2 2 2-4 6-4-2z" fill="#c29467" />
      </>
    ),
  },
];

function Taskbar() {
  return (
    <div className="relative flex h-10 shrink-0 items-stretch overflow-hidden border-t border-[#0d2c4d] bg-[linear-gradient(90deg,#1d5c94,#1f6ca9_3%,#3a96d1_29%,#2f90cf_45%,#2580c6_65%,#1f66ad_80%,#1d5ca2_86%,#153f70_88%,#163f72)] font-['Open_Sans',sans-serif] text-[11px] text-white">
      <svg className="absolute inset-0 h-full w-full" preserveAspectRatio="none" viewBox="0 0 1920 40" aria-hidden="true">
        <path d="M690 40C780 18 850 4 960 0h90C920 6 800 22 720 40z" fill="#fff" opacity=".07" />
        <path d="M1304 0h14c26 12 50 26 66 40h-22c-14-14-34-28-58-40z" fill="#fff" opacity=".35" />
        <path d="M0 0h1920v2H0z" fill="#cfe6f7" opacity=".45" />
      </svg>
      <button aria-label="Iniciar" className="relative flex w-[59px] items-center pl-2">
        <Svg size={38}>
          <circle cx="19" cy="19" r="18" fill="#1b5482" stroke="#7fb2d6" />
          <path d="M3 16a16 16 0 0 1 32 0c-8-3-24-3-32 0z" fill="#9fc3dd" opacity=".7" />
          <path d="M10 11c3-2 5-2 8 0l-2 8c-3-2-5-2-8 0z" fill="#ee6425" />
          <path d="M20 12c3 2 5 2 9 0l-2 8c-3 2-6 2-9 0z" fill="#8cc63e" />
          <path d="M8 21c3-2 5-2 8 0l-2 7c-3-2-5-2-8 0z" fill="#3a9fe0" transform="translate(1 0)" />
          <path d="M18 22c3 2 5 2 9 0l-2 7c-3 2-6 2-9 0z" fill="#fdc82c" />
        </Svg>
      </button>
      <div className="relative flex gap-[3px] py-px">
        {apps.map(({ name, icon }, i) => (
          <button
            key={name}
            aria-label={name}
            className={clsx(
              'flex w-[59px] items-center justify-center rounded-[3px] border border-[#16436c] ring-1 ring-white/35 ring-inset',
              i === 1 ? 'bg-linear-to-br from-[#f4f8fb] to-[#8fc4e2]' : 'bg-linear-to-br from-[#9cc6e2] to-[#4fa5d5]'
            )}
          >
            <Svg size={32}>{icon}</Svg>
          </button>
        ))}
      </div>
      <div className="relative ml-auto flex items-center text-[12px]">
        <span className="mb-1.5 mr-4 text-[12px]">PT</span>
        <span className="mr-[13px] border-x-4 border-b-4 border-x-transparent border-b-white" />
        <Svg className="mr-2">
          <path d="M2 1v15" stroke="#fff" strokeWidth="1.500" />
          <path d="M3 2c4-1 5 2 10 0v7C8 11 7 8 3 9z" fill="#fff" />
          <circle cx="11" cy="11.500" r="4.500" fill="#d3241f" />
          <path d="m9 9.500 4 4m0-4-4 4" stroke="#fff" strokeWidth="1.500" />
        </Svg>
        <Svg className="mr-2">
          <path d="M2 5h3l4-4v14l-4-4H2z" fill="#fff" />
          <path d="M11.500 5c1.500 2 1.500 4 0 6" stroke="#fff" strokeWidth="1.300" />
        </Svg>
        <Svg className="mr-3">
          <path d="M5 4h10v8H5zM6 15h8M10 12v3" stroke="#fff" strokeWidth="1.700" />
          <path d="M1 1v4h4V1M3 5v6" stroke="#fff" strokeWidth="1.300" />
        </Svg>
        <div className="mr-3 text-center leading-[17px]">
          12:53
          <br />
          04/02/2018
        </div>
        <button aria-label="Mostrar área de trabalho" className="h-[38px] w-[14px] border border-[#7f9dbd] bg-linear-to-b from-[#8199b6] via-[#234a78] to-[#1b4c86]" />
      </div>
    </div>
  );
}

function ScrollBar() {
  return (
    <div className="relative flex w-[17px] shrink-0 flex-col items-center bg-[#f1f1f1]" aria-hidden="true">
      <span className="mt-[7px] border-x-4 border-b-4 border-x-transparent border-b-[#505050]" />
      <span className="mt-[93px] h-[68%] w-[13px] bg-[#c1c1c1]" />
      <span className="mb-[7px] mt-auto border-x-4 border-t-4 border-x-transparent border-t-[#505050]" />
      <span className="absolute bottom-[5px] right-0 h-[60px] w-1 bg-black" />
    </div>
  );
}

export default function App() {
  return (
    <div className="flex h-screen flex-col overflow-hidden bg-white font-['Liberation_Sans',Arial,sans-serif]">
      <TitleBar />
      <AddressBar />
      <div className="flex min-h-0 flex-1">
        <div className="flex min-w-0 flex-1 flex-col">
          <NavBar />
          <ActionBar />
          <main className="grid min-h-0 flex-1 grid-cols-2 items-start gap-[51px] overflow-hidden px-5 pt-[5px] text-[13px] leading-[19px]">
            <MainInfo />
            <div className="min-w-0">
              <GenericConfig />
              <SpecificConfig />
            </div>
          </main>
          <StatusBar />
        </div>
        <ScrollBar />
      </div>
      <Taskbar />
    </div>
  );
}
